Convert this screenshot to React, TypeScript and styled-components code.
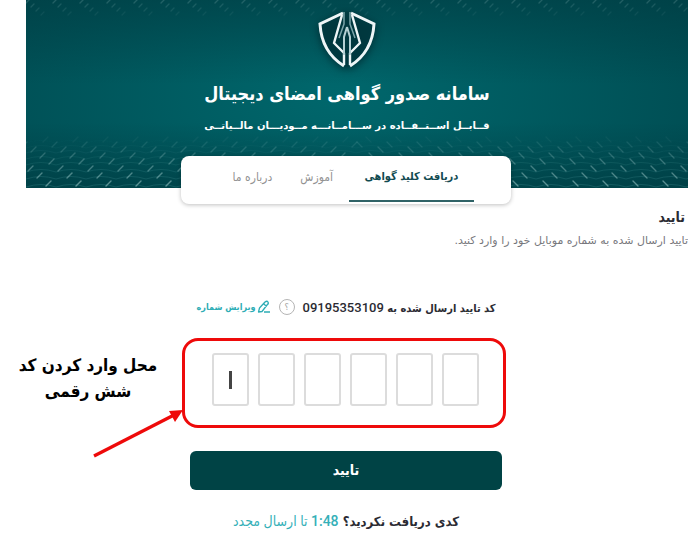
import React from "react";
import styled, { createGlobalStyle } from "styled-components";

const condensed = `"DejaVu Sans Condensed", "DejaVu Sans", sans-serif`;

const GlobalStyle = createGlobalStyle`
  * { box-sizing: border-box; }
  body {
    margin: 0;
    background: #ffffff;
    color: #2b2b33;
    font-family: "DejaVu Sans", sans-serif;
    overflow-x: hidden;
  }
  h1, h2, p { margin: 0; }
  button, input { font-family: inherit; }
`;

const Page = styled.div`
  display: flex;
  flex-direction: column;
`;

const Hero = styled.header`
  position: relative;
  height: 188px;
  margin-left: 26px;
  padding: 8px 20px 0 0;
  display: flex;
  flex-direction: column;
  align-items: center;
  overflow: hidden;
  color: #ffffff;
  background:
    linear-gradient(rgba(0, 56, 62, 0.55), rgba(0, 56, 62, 0) 45%, rgba(0, 56, 62, 0) 65%, rgba(0, 56, 62, 0.6)),
    radial-gradient(ellipse 70% 150% at 47% 50%, #00676c, #00484e);
`;

const Mesh = styled.svg`
  position: absolute;
  inset: 0;
  width: 100%;
  height: 100%;
`;

const Emblem = styled.svg`
  position: relative;
  width: 64px;
  height: 64px;
  filter: drop-shadow(0 2px 4px rgba(0, 30, 36, 0.8));
`;

const Title = styled.h1`
  position: relative;
  margin-top: 8px;
  font-family: ${condensed};
  font-size: 18px;
  line-height: 28px;
  white-space: nowrap;
`;

const Subtitle = styled.p`
  position: relative;
  margin-top: 10px;
  font-size: 10px;
  font-weight: 700;
  line-height: 16px;
  white-space: nowrap;
`;

const Tabs = styled.nav`
  position: relative;
  align-self: center;
  width: 330px;
  height: 48px;
  margin: -32px 0 0 4px;
  padding: 0 37px;
  display: flex;
  gap: 4px;
  background: #ffffff;
  border-radius: 8px;
  box-shadow: 0 1px 4px rgba(0, 0, 0, 0.25);
`;

const Tab = styled.a<{ $active?: boolean }>`
  flex: ${(p) => (p.$active ? "0 0 125px" : "0 0 auto")};
  height: 46px;
  padding: 0 12px;
  text-align: center;
  text-decoration: none;
  white-space: nowrap;
  font-family: ${condensed};
  font-size: ${(p) => (p.$active ? "11px" : "12px")};
  line-height: 42px;
  font-weight: ${(p) => (p.$active ? 700 : 400)};
  color: ${(p) => (p.$active ? "#114a50" : "#929292")};
  border-bottom: 2px solid ${(p) => (p.$active ? "#2f6266" : "transparent")};
`;

const Intro = styled.section`
  padding-top: 3px;
`;

const IntroTitle = styled.h2`
  padding-right: 3px;
  font-family: ${condensed};
  font-size: 14px;
  line-height: 20px;
`;

const IntroText = styled.p`
  margin-top: 4px;
  font-size: 11px;
  line-height: 20px;
  color: #77777c;
  white-space: nowrap;
`;

const Form = styled.form`
  margin-top: 46px;
  display: flex;
  flex-direction: column;
  align-items: center;
`;

const SentTo = styled.div`
  height: 20px;
  display: flex;
  align-items: center;
  gap: 8px;
  margin-left: 4px;
  font-family: ${condensed};
  font-size: 11px;
  font-weight: 700;
  white-space: nowrap;
`;

const Phone = styled.bdi`
  font-family: Roboto, sans-serif;
  font-size: 13px;
  font-weight: 500;
`;

const HelpButton = styled.button`
  width: 16px;
  height: 16px;
  padding: 0;
  border: 1px solid #b5b5b5;
  border-radius: 50%;
  background: none;
  color: #a5a5a5;
  font-size: 9px;
  line-height: 14px;
`;

const EditLink = styled.a`
  display: flex;
  align-items: center;
  gap: 1px;
  color: #2eadb5;
  font-size: 9px;
  text-decoration: none;
`;

const CodeRow = styled.div`
  width: 100%;
  margin-top: 21px;
  display: grid;
  grid-template-columns: 1fr 324px 1fr;
  direction: ltr;
`;

const Note = styled.div`
  position: relative;
  padding: 14px 10px 0 4px;
  color: #000000;
  font-family: ${condensed};
  font-size: 17px;
  font-weight: 700;
  line-height: 26px;
  text-align: center;
  direction: rtl;
`;

const Arrow = styled.svg`
  position: absolute;
  right: -2px;
  top: 68px;
  width: 92px;
  height: 54px;
`;

const CodeFrame = styled.fieldset`
  height: 90px;
  margin: 0;
  padding: 12px 0 0 3px;
  display: flex;
  justify-content: center;
  gap: 9px;
  border: 3px solid #ee0a0a;
  border-radius: 16px;
`;

const Digit = styled.input<{ $caret?: boolean }>`
  width: 37px;
  height: 53px;
  padding: 0;
  border: 2px solid #dcdcdc;
  border-radius: 3px;
  text-align: center;
  font-size: 18px;
  background: ${(p) =>
    p.$caret
      ? "linear-gradient(#444444, #444444) center / 3px 18px no-repeat #ffffff"
      : "#ffffff"};
`;

const Submit = styled.button`
  width: 312px;
  height: 39px;
  margin: 23px 0 0 4px;
  padding: 0 0 2px;
  border: 0;
  border-radius: 6px;
  background: #004345;
  color: #ffffff;
  font-family: ${condensed};
  font-size: 14px;
  font-weight: 700;
`;

const Resend = styled.p`
  margin: 19px 0 0 4px;
  font-family: ${condensed};
  font-size: 13px;
  line-height: 24px;
  font-weight: 700;
  white-space: nowrap;
`;

const Timer = styled.span`
  color: #35b0b8;
  font-family: Roboto, ${condensed};
  font-size: 14px;
  font-weight: 500;
`;

const buildMesh = () => {
  const ticks: React.ReactNode[] = [];
  const waves: React.ReactNode[] = [];
  for (let row = 0; row < 8; row++) {
    const y = 184 - row * 8 + Math.round(row * row * 0.25);
    const strength = 0.55 - row * 0.07;
    let wave = `M0 ${y + 3}`;
    for (let x = 0; x < 680; x += 30) wave += ` q15 -5 30 0`;
    waves.push(<path key={`w${row}`} d={wave} stroke="#3e8d90" strokeWidth={1} opacity={strength * 0.6} />);
    for (let i = -2; i < 26; i++) {
      const left = i * 30 + 20 - row * 9;
      if (left < 331) {
        ticks.push(<path key={`l${row}-${i}`} d={`M${left} ${y + 2}l5 -5`} opacity={strength} />);
        ticks.push(<path key={`r${row}-${i}`} d={`M${662 - left} ${y + 2}l-5 -5`} opacity={strength} />);
      }
    }
  }
  for (let row = 0; row < 4; row++) {
    for (let i = 0; i < 26; i++) {
      const x = i * 27 + row * 5;
      ticks.push(<path key={`t${row}-${i}`} d={`M${x} ${row * 4 + 3}l3 -3`} opacity={0.2 - row * 0.04} />);
    }
  }
  return { ticks, waves };
};

const mesh = buildMesh();

export default function App() {
  return (
    <Page dir="rtl" lang="fa">
      <GlobalStyle />
      <Hero>
        <Mesh viewBox="0 0 662 188" preserveAspectRatio="xMidYMax slice" fill="none" aria-hidden="true">
          {mesh.waves}
          <g stroke="#a3cdcd" strokeWidth="1.4" strokeLinecap="round">{mesh.ticks}</g>
        </Mesh>
        <Emblem viewBox="0 0 64 64" fill="none" aria-hidden="true">
          <path d="M32 3 5 16c1 18 8 33 27 43 19-10 26-25 27-43Z" fill="#003b42" opacity=".75" />
          <path d="M28 5 5 16c1 18 8 32 24 42M36 5l23 11c-1 18-8 32-24 42" stroke="#eef6f7" strokeWidth="3" />
          <path d="M27 7 19 35l10 10v12M37 7l8 28-10 10v12" stroke="#eef6f7" strokeWidth="2.400" strokeLinejoin="round" />
          <path d="M32 19l-3 10v18M32 19l3 10v18" stroke="#b4d0d3" strokeWidth="2" />
          <path d="M29 4v12l-5 14M35 4v12l5 14" stroke="#7ba5aa" strokeWidth="1.500" />
        </Emblem>
        <Title>سامانه صدور گواهی امضای دیجیتال</Title>
        <Subtitle>قــابــل اســتــفــاده در ســـامــانـــه مــودیـــان مالــیاتــی</Subtitle>
      </Hero>
      <Tabs>
        <Tab href="#key" $active>دریافت کلید گواهی</Tab>
        <Tab href="#learn">آموزش</Tab>
        <Tab href="#about">درباره ما</Tab>
      </Tabs>
      <Intro>
        <IntroTitle>تایید</IntroTitle>
        <IntroText>تایید ارسال شده به شماره موبایل خود را وارد کنید.</IntroText>
      </Intro>
      <Form onSubmit={(e) => e.preventDefault()}>
        <SentTo>
          <span>کد تایید ارسال شده به <Phone>09195353109</Phone></span>
          <HelpButton type="button">؟</HelpButton>
          <EditLink href="#edit">
            <svg width="14" height="14" viewBox="0 0 14 14" fill="none" stroke="currentColor" strokeWidth="1.300" strokeLinejoin="round" aria-hidden="true">
              <path d="M1.500 12 2.500 8 8 2q2-1.500 3 0t-1 3L5 11.500ZM7 4l2.500 2.500M7 12h6" />
            </svg>
            ویرایش شماره
          </EditLink>
        </SentTo>
        <CodeRow>
          <Note>
            محل وارد کردن کد
            <br />
            شش رقمی
            <Arrow viewBox="0 0 92 54" aria-hidden="true">
              <path d="M2 50 82 9" stroke="#ee0a0a" strokeWidth="3.400" />
              <path d="M91 4 77 5l6 11Z" fill="#ee0a0a" />
            </Arrow>
          </Note>
          <CodeFrame>
            {[1, 2, 3, 4, 5, 6].map((n) => (
              <Digit key={n} $caret={n === 1} aria-label={`رقم ${n}`} inputMode="numeric" maxLength={1} />
            ))}
          </CodeFrame>
        </CodeRow>
        <Submit type="submit">تایید</Submit>
        <Resend>
          کدی دریافت نکردید؟ <Timer>1:48 تا ارسال مجدد</Timer>
        </Resend>
      </Form>
    </Page>
  );
}
